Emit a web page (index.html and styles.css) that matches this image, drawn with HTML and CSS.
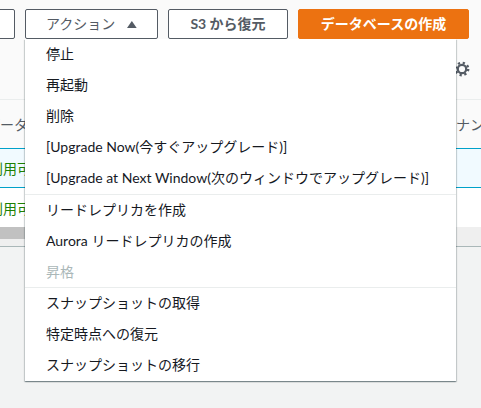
FILE: index.html
```html
<!DOCTYPE html>
<html lang="ja">
<head>
<meta charset="utf-8">
<title>データベース</title>
<link rel="stylesheet" href="styles.css">
</head>
<body>
<div class="page">
<div class="card">
  <div class="toolbar">
    <button class="btn btn-ghost">変更</button>
    <div class="dd">
      <button class="btn btn-action">アクション
        <svg class="caret" width="10" height="8" viewBox="0 0 10 8"><polygon points="0,8 5,1 10,8" fill="#545b64"/></svg>
      </button>
      <div class="menu">
        <ul class="group">
          <li>停止</li>
          <li>再起動</li>
          <li>削除</li>
          <li>[Upgrade Now(今すぐアップグレード)]</li>
          <li>[Upgrade at Next Window(次のウィンドウでアップグレード)]</li>
        </ul>
        <ul class="group">
          <li>リードレプリカを作成</li>
          <li>Aurora リードレプリカの作成</li>
          <li class="disabled">昇格</li>
        </ul>
        <ul class="group group-last">
          <li>スナップショットの取得</li>
          <li>特定時点への復元</li>
          <li>スナップショットの移行</li>
        </ul>
      </div>
    </div>
    <button class="btn btn-s3">S3 から復元</button>
    <button class="btn btn-primary">データベースの作成</button>
  </div>
  <div class="filter">
    <svg class="gear" width="16" height="16" viewBox="0 0 16 16">
      <circle cx="8" cy="8" r="6.2" fill="none" stroke="#545b64" stroke-width="2.4" stroke-dasharray="2.2 2.67"/>
      <circle cx="8" cy="8" r="4.2" fill="none" stroke="#545b64" stroke-width="2.2"/>
    </svg>
  </div>
  <div class="table">
    <div class="row head">
      <div class="cell c1">データベース識別子</div>
      <div class="cell c2">メンテナンス</div>
    </div>
    <div class="row selected">
      <div class="cell c1 status">
        <svg width="16" height="16" viewBox="0 0 16 16"><circle cx="8" cy="8" r="7" fill="none" stroke="#1d8102" stroke-width="2"/><path d="M4.5 8.2l2.3 2.3 4.5-4.6" fill="none" stroke="#1d8102" stroke-width="2"/></svg>
        <span>利用可能</span>
      </div>
      <div class="cell c2"></div>
    </div>
    <div class="row">
      <div class="cell c1 status">
        <svg width="16" height="16" viewBox="0 0 16 16"><circle cx="8" cy="8" r="7" fill="none" stroke="#1d8102" stroke-width="2"/><path d="M4.5 8.2l2.3 2.3 4.5-4.6" fill="none" stroke="#1d8102" stroke-width="2"/></svg>
        <span>利用可能</span>
      </div>
      <div class="cell c2"></div>
    </div>
  </div>
  <div class="scroll"><div class="thumb"></div></div>
</div>
</div>
</body>
</html>
```

FILE: styles.css
```css
* {
  box-sizing: border-box;
}

html,
body {
  margin: 0;
  background: #f2f3f3;
}

body {
  font-family: "Lato", "Noto Sans CJK JP", sans-serif;
  font-size: 14px;
  color: #16191f;
}

.page {
  min-height: 408px;
}

.card {
  background: #fafafa;
  border-bottom: 1px solid #aab7b8;
}

.toolbar {
  display: flex;
  justify-content: flex-end;
  gap: 10px;
  padding: 9px 12px 0 0;
  height: 39px;
}

.btn {
  height: 30px;
  border: 1px solid #545b64;
  border-radius: 2px;
  background: #fff;
  color: #545b64;
  font-family: inherit;
  font-size: 14px;
  line-height: 20px;
  padding: 0 20px;
  display: flex;
  align-items: center;
  justify-content: center;
  flex-shrink: 0;
  white-space: nowrap;
}

.btn-ghost {
  width: 110px;
}

.dd {
  position: relative;
  z-index: 20;
  flex-shrink: 0;
}

.btn-action {
  width: 133px;
  justify-content: flex-start;
  gap: 12px;
  font-weight: 400;
}

.caret {
  display: block;
  margin-top: -1px;
}

.btn-s3 {
  width: 120px;
  font-weight: 700;
}

.btn-primary {
  width: 171px;
  background: #ec7211;
  border-color: #ec7211;
  color: #fff;
  font-weight: 700;
}

.menu {
  position: absolute;
  left: 0;
  top: 100%;
  width: 431px;
  background: #fff;
  box-shadow: 0 1px 1px 0 rgba(0, 28, 36, 0.3), 1px 1px 1px 0 rgba(0, 28, 36, 0.15), -1px 1px 1px 0 rgba(0, 28, 36, 0.15);
  z-index: 10;
}

.group {
  list-style: none;
  margin: 0;
  padding: 0;
}

.group + .group {
  border-top: 1px solid #eaeded;
}

.group-last {
  margin-top: -1px;
}

.group li {
  height: 31px;
  line-height: 29px;
  padding: 0 0 2px 21px;
  white-space: nowrap;
  color: #16191f;
}

.group li.disabled {
  color: #aab7b8;
}

.filter {
  height: 60px;
  display: flex;
  align-items: center;
  justify-content: flex-end;
  padding-right: 11px;
}

.gear {
  display: block;
}

.table {
  margin-left: -40px;
}

.row {
  display: grid;
  grid-template-columns: 454px 1fr;
  height: 39px;
  background: #fff;
  white-space: nowrap;
  overflow: hidden;
}

.row.head {
  height: 49px;
  background: #fafafa;
  border-top: 1px solid #eaeded;
  color: #545b64;
}

.row.selected {
  height: 40px;
  background: #f1faff;
  border-top: 1px solid #00a1c9;
  border-bottom: 1px solid #00a1c9;
}

.cell {
  display: flex;
  align-items: center;
  overflow: hidden;
}

.head .c1 {
  padding-left: 26px;
}

.status {
  padding-left: 10px;
  gap: 3px;
  color: #1d8102;
}

.status svg {
  flex-shrink: 0;
}

.scroll {
  height: 19px;
  background: #efefef;
}

.thumb {
  width: 300px;
  height: 12px;
  background: #c1c1c1;
}
```
